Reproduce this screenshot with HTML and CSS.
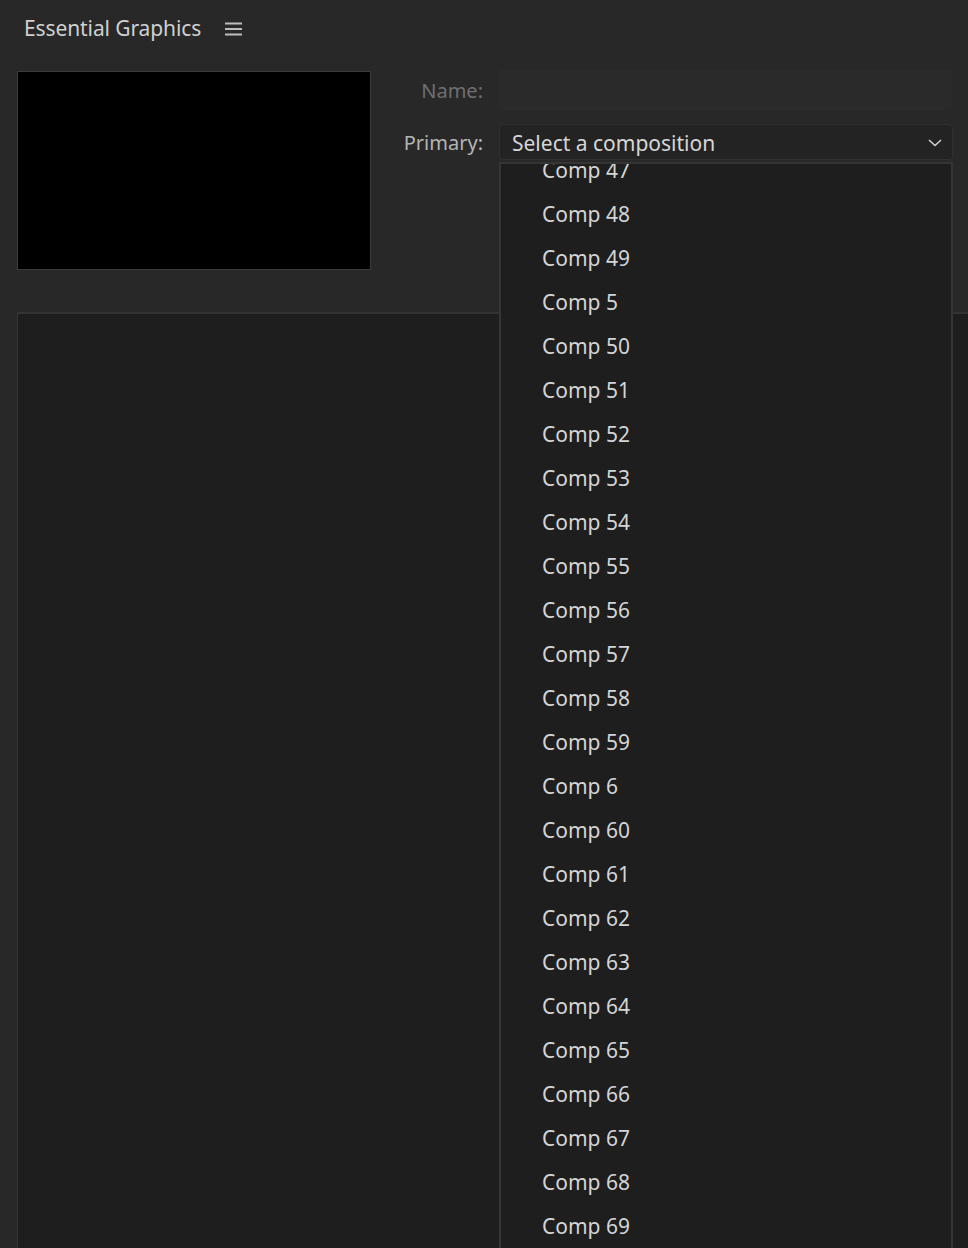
FILE: index.html
```html
<!DOCTYPE html>
<html>
<head>
<meta charset="utf-8">
<link rel="stylesheet" href="styles.css">
</head>
<body>
<div class="app">
  <header class="header">
    <span class="title">Essential Graphics</span>
    <svg class="menu" width="18" height="14" viewBox="0 0 18 14"><rect x="0" y="0.5" width="17" height="2" fill="#bdbdbd"/><rect x="0" y="6" width="17" height="2" fill="#bdbdbd"/><rect x="0" y="11.5" width="17" height="2" fill="#bdbdbd"/></svg>
  </header>
  <section class="top">
    <div class="preview"></div>
    <div class="form">
      <div class="row">
        <span class="label dim">Name:</span>
        <div class="field name-field"></div>
      </div>
      <div class="row row-primary">
        <span class="label">Primary:</span>
        <div class="field select">
          <span class="select-text">Select a composition</span>
          <svg class="chev" width="14" height="8" viewBox="0 0 14 8"><path d="M1 1l6 5.5L13 1" fill="none" stroke="#cfcfcf" stroke-width="1.6"/></svg>
        </div>
      </div>
    </div>
  </section>
  <section class="panel"></section>

  <div class="dropdown">
    <ul class="list">
      <li>Comp 47</li><li>Comp 48</li><li>Comp 49</li><li>Comp 5</li><li>Comp 50</li><li>Comp 51</li><li>Comp 52</li><li>Comp 53</li><li>Comp 54</li><li>Comp 55</li><li>Comp 56</li><li>Comp 57</li><li>Comp 58</li><li>Comp 59</li><li>Comp 6</li><li>Comp 60</li><li>Comp 61</li><li>Comp 62</li><li>Comp 63</li><li>Comp 64</li><li>Comp 65</li><li>Comp 66</li><li>Comp 67</li><li>Comp 68</li><li>Comp 69</li>
    </ul>
  </div>
</div>
</body>
</html>
```
FILE: styles.css
```css
html, body {
  margin: 0;
  padding: 0;
  background: #282828;
  height: 100%;
  overflow: hidden;
}
.app {
  position: relative;
  width: 968px;
  height: 1248px;
  font-family: "Noto Sans", "Open Sans", sans-serif;
  color: #d2d2d2;
  display: flex;
  flex-direction: column;
}
.header {
  height: 56px;
  display: flex;
  align-items: center;
  padding-left: 24px;
  gap: 24px;
}
.title {
  font-size: 21px;
  color: #d0d0d0;
  letter-spacing: -0.1px;
}
.menu { margin-top: 2px; }
.top {
  display: flex;
  padding-left: 17px;
  padding-top: 15px;
  height: 241px;
}
.preview {
  width: 352px;
  height: 197px;
  background: #000;
  border: 1px solid #3c3c3c;
}
.form {
  display: flex;
  flex-direction: column;
  margin-left: 28px;
  width: 555px;
}
.row {
  display: flex;
  align-items: center;
}
.row-primary {
  margin-top: 14px;
}
.label {
  width: 84px;
  text-align: right;
  font-size: 20px;
  color: #b4b4b4;
  margin-right: 16px;
}
.label.dim { color: #6f6f6f; }
.field {
  width: 452px;
  box-sizing: border-box;
}
.name-field {
  height: 40px;
  margin-top: -1px;
  border: 1px solid #2c2c2c;
  border-radius: 3px;
  background: #2a2a2a;
}
.select {
  height: 36px;
  width: 454px;
  background: #232323;
  border: 1px solid #303030;
  border-radius: 4px;
  display: flex;
  align-items: center;
  justify-content: space-between;
  padding: 0 10px 0 12px;
}
.select-text {
  font-size: 21px;
  color: #d6d6d6;
  margin-top: 2px;
}
.chev { margin-top: 1px; }
.panel {
  margin-left: 17px;
  flex: 1;
  background: #1e1e1e;
  border-top: 2px solid #333;
  border-left: 1px solid #363636;
}
.dropdown {
  position: absolute;
  left: 499px;
  top: 162px;
  width: 454px;
  bottom: 0;
  box-sizing: border-box;
  background: #1e1e1e;
  border: 2px solid #353535;
  border-bottom: none;
  overflow: hidden;
}
.list {
  list-style: none;
  margin: -16px 0 0 0;
  padding: 0;
}
.list li {
  height: 44px;
  line-height: 44px;
  padding-left: 41px;
  font-size: 21px;
  color: #d4d4d4;
}
```
